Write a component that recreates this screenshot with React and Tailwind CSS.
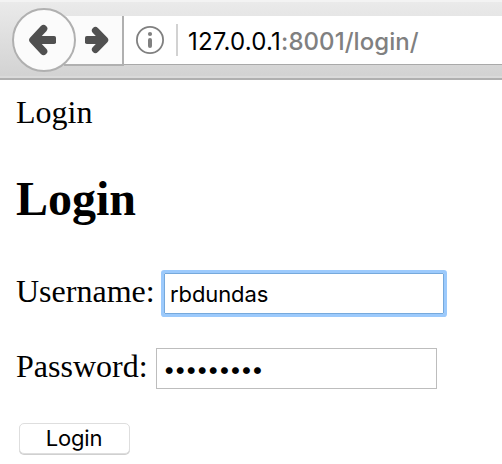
function BackArrow() {
  return (
    <svg className="h-8 w-7" viewBox="0 0 28 32" fill="none">
      <path d="M14.6 4.6 3.9 16 14.6 27.4" stroke="#505050" strokeWidth="7.4" strokeLinecap="round" strokeLinejoin="round" />
      <path d="M5 9.5v13L15 16z" fill="#505050" />
      <rect x="5" y="12" width="22" height="8" rx="1.8" fill="#505050" />
    </svg>
  );
}

function ForwardArrow() {
  return (
    <svg className="h-7 w-[26px]" viewBox="0 0 26 28" fill="none">
      <path d="M11.4 4.5 20.7 14 11.4 23.5" stroke="#505050" strokeWidth="7" strokeLinecap="round" strokeLinejoin="round" />
      <rect x="1" y="10" width="20" height="8" rx="1.8" fill="#505050" />
    </svg>
  );
}

function Toolbar() {
  return (
    <header className="relative h-20 border-b-2 border-[#b0b0b0] bg-gradient-to-b from-[#ebebeb] to-[#d2d2d2] pt-4 pl-16">
      <div className="absolute inset-x-0 top-0 h-0.5 bg-[#f3f3f3]" />
      <div className="absolute inset-x-0 bottom-0 h-0.5 bg-[#dadada]" />
      <div className="flex h-[49px] items-start">
        <div className="flex h-[50px] w-[60px] shrink-0 items-center border-r-2 border-b-2 border-[#b0b0b0] bg-[#fbfbfb] pl-5">
          <ForwardArrow />
        </div>
        <div className="flex h-[49px] flex-1 items-center border-b border-[#a9a9a9] bg-white pl-3">
          <svg className="h-7 w-7 shrink-0" viewBox="0 0 28 28" fill="none">
            <circle cx="14" cy="14" r="13.1" stroke="#808080" strokeWidth="1.8" />
            <circle cx="14" cy="8" r="2.1" fill="#808080" />
            <path d="M14 14v6" stroke="#808080" strokeWidth="4" strokeLinecap="round" />
          </svg>
          <div className="ml-3 h-8 w-0.5 bg-[#d2d2d2]" />
          <div className="ml-[10px] whitespace-nowrap pt-[3px] font-[Inter,sans-serif] text-[24px] leading-8 tracking-[0.2px] text-black">
            127.0.0.1<span className="font-medium tracking-[0.05px] text-[#808080]">:8001/login/</span>
          </div>
        </div>
      </div>
      <div className="absolute top-2 left-3 flex size-16 items-center justify-center rounded-full border-2 border-[#b0b0b0] bg-[#fbfbfb]">
        <div className="-ml-0.5"><BackArrow /></div>
      </div>
    </header>
  );
}

export default function App() {
  return (
    <div className="h-[464px] w-[502px] overflow-hidden bg-white font-['Liberation_Serif',serif] text-[32px] leading-9 text-black">
      <Toolbar />
      <main className="pt-[14px] pl-4">
        <p>Login</p>
        <h2 className="mt-[42px] text-[48px] leading-[54px] font-bold">Login</h2>
        <div className="mt-[47px] flex h-[41px] items-start">
          <label className="w-[148px] whitespace-nowrap">Username:</label>
          <div className="h-[41px] w-[280px] rounded-[1px] border border-[#76a9dc] pt-1 pl-[5px] font-[Inter,sans-serif] text-[22px] leading-8 tracking-[-0.1px] ring-[3px] ring-[#9ccafc]">rbdundas</div>
        </div>
        <div className="mt-[34px] flex h-[41px] items-start">
          <label className="w-[140px] whitespace-nowrap">Password:</label>
          <div className="flex h-[41px] w-[281px] items-center border border-[#bdbdbd] pt-px pl-[6px] font-[Inter,sans-serif] text-[22px] leading-8 tracking-[-1.35px]">•••••••••</div>
        </div>
        <button className="mt-[34px] ml-[3px] flex h-[31px] w-[111px] items-center justify-center rounded-[5px] border border-[#dedede] bg-white pr-px pb-px font-[Inter,sans-serif] text-[22px] leading-7 tracking-[-0.2px] shadow-[0_1px_0_#d0d0d0]">Login</button>
      </main>
    </div>
  );
}
